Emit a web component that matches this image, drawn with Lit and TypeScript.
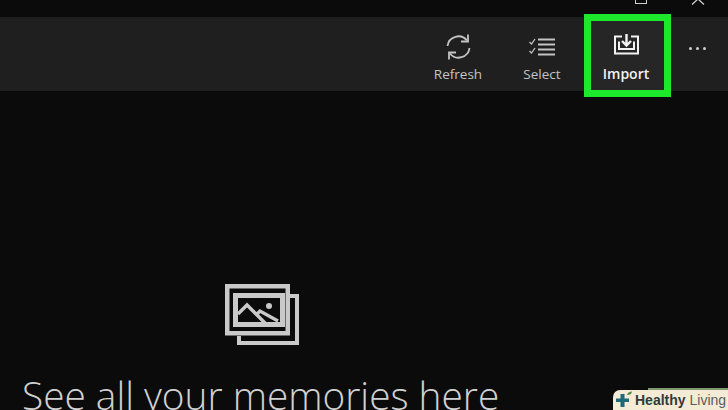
import { LitElement, html, css, svg } from "lit";
import { customElement } from "lit/decorators.js";

const refreshIcon = svg`
  <path d="M2.5 12 A11 11 0 0 1 22 6.5" />
  <path d="M23 0.5 V7.5 H16" />
  <path d="M24.5 14 A11 11 0 0 1 5 19.5" />
  <path d="M4 25.5 V18.5 H11" />
`;

const selectIcon = svg`
  <path d="M0.5 5 L2.5 7 L6 2" stroke-width="1.3" />
  <path d="M0.5 14 L2.5 16 L6 11" stroke-width="1.3" />
  <path d="M9 2.5 H26 M9 7.5 H26 M9 12.5 H26 M9 17.5 H26" stroke-width="1.9" />
`;

const importIcon = svg`
  <path d="M8 3.5 H1 V20.5 H24 V3.5 H17" stroke-width="2" />
  <path d="M5 8.5 V16 H20 V8.5" stroke-width="2" />
  <path d="M12.5 1 V12 M8 8 L12.5 12.5 L17 8" stroke-width="2.4" />
`;

@customElement("app-root")
export class AppRoot extends LitElement {
  static styles = css`
    :host {
      display: block;
      width: 728px;
      height: 410px;
      overflow: hidden;
      background: #0b0b0b;
      color: #d6d6d6;
      font-family: "Open Sans", "Liberation Sans", sans-serif;
    }
    .page {
      position: relative;
      height: 410px;
      overflow: hidden;
    }
    .titlebar {
      height: 17px;
      display: flex;
      justify-content: flex-end;
      align-items: flex-start;
      overflow: hidden;
    }
    .max {
      width: 10px;
      height: 9px;
      border: 1.5px solid #cfcfcf;
      margin-right: 44px;
      margin-top: -7px;
    }
    .close {
      display: block;
      margin-right: 23px;
    }
    .toolbar {
      height: 74px;
      background: #1f1f1f;
      display: flex;
      justify-content: flex-end;
      padding-right: 7px;
    }
    .cmd {
      width: 84px;
      display: flex;
      flex-direction: column;
      align-items: center;
      font-size: 13.5px;
      line-height: 18px;
      color: #c4c4c4;
    }
    .cmd .glyph {
      height: 30px;
      margin-top: 15px;
      margin-bottom: 3px;
      display: flex;
      align-items: center;
      justify-content: center;
    }
    .cmd svg {
      fill: none;
      stroke: currentColor;
      stroke-width: 1.8;
    }
    .cmd svg.raised {
      margin-bottom: 6px;
    }
    .cmd.active {
      color: #f2f2f2;
      background: #262626;
      font-size: 14px;
      font-weight: 600;
      margin-right: 6px;
    }
    .more {
      width: 47px;
      display: flex;
      justify-content: center;
      gap: 4px;
      padding-top: 30px;
      box-sizing: border-box;
    }
    .more i {
      width: 3px;
      height: 3px;
      border-radius: 50%;
      background: #cfcfcf;
    }
    .highlight {
      position: absolute;
      left: 584px;
      top: 14px;
      width: 87px;
      height: 83px;
      box-sizing: border-box;
      border: 7px solid #1ee82b;
    }
    .empty {
      padding-top: 193px;
      padding-left: 22px;
    }
    .photos {
      display: block;
      margin-left: 203px;
      fill: none;
      stroke: #c9c9c9;
    }
    h1 {
      margin: 23px 0 0;
      font-size: 38.8px;
      line-height: 52px;
      font-weight: 300;
      color: #d0d0d0;
      white-space: nowrap;
    }
    .badge {
      position: absolute;
      right: 0;
      bottom: 0;
      width: 115px;
      height: 20px;
      background: #f3ebd5;
      border-top-left-radius: 7px;
      display: flex;
      align-items: center;
      gap: 1px;
      padding-left: 3px;
      box-sizing: border-box;
      font-family: "Liberation Sans", Arial, sans-serif;
      font-size: 14px;
      color: #3d3d3d;
      white-space: nowrap;
    }
    .badge::before {
      content: "";
      position: absolute;
      right: 0;
      top: -2px;
      width: 80px;
      height: 2px;
      background: #7d9a6c;
    }
    .badge b {
      color: #2f3a3c;
    }
    .badge span {
      color: #5c5c5c;
      margin-left: 3px;
    }
  `;

  render() {
    return html`
      <div class="page">
        <div class="titlebar">
          <div class="max"></div>
          <svg class="close" width="14" height="5" viewBox="0 0 14 5" fill="none" stroke="#cfcfcf" stroke-width="1.3">
            <path d="M1 4.5 L7 -1 L13 4.5" />
          </svg>
        </div>
        <div class="toolbar">
          <div class="cmd">
            <div class="glyph"><svg width="27" height="26" viewBox="0 0 27 26">${refreshIcon}</svg></div>
            Refresh
          </div>
          <div class="cmd">
            <div class="glyph"><svg width="27" height="20" viewBox="0 0 27 20">${selectIcon}</svg></div>
            Select
          </div>
          <div class="cmd active">
            <div class="glyph"><svg class="raised" width="25" height="22" viewBox="0 0 25 22">${importIcon}</svg></div>
            Import
          </div>
          <div class="more"><i></i><i></i><i></i></div>
        </div>
        <div class="highlight"></div>
        <div class="empty">
          <svg class="photos" width="75" height="62" viewBox="0 0 75 62">
            <rect x="2.25" y="2.25" width="60.5" height="47" stroke-width="4.5" />
            <rect x="10.5" y="11.5" width="47" height="29" stroke-width="5" />
            <path d="M72 10 V59 H14 V52 M65 12 H72" stroke-width="4" />
            <path d="M13 30 L22 21 L42 41 M31 31 L35 27 L53 37" stroke-width="3.4" />
            <circle cx="44" cy="22" r="3" fill="#c9c9c9" stroke="none" />
          </svg>
          <h1>See all your memories here</h1>
        </div>
        <div class="badge">
          <svg width="18" height="18" viewBox="0 0 18 18">
            <path d="M4.5 3 H8.5 V7.5 H13 V11 H8.5 V16 H4.5 V11 H0 V7.5 H4.5 Z" fill="#1d6a78" />
            <path d="M11 4 Q12 0.5 16 0.5 Q15.5 4 11 4 Z" fill="#4d8a3a" />
          </svg>
          <b>Healthy</b><span>Living</span>
        </div>
      </div>
    `;
  }
}
